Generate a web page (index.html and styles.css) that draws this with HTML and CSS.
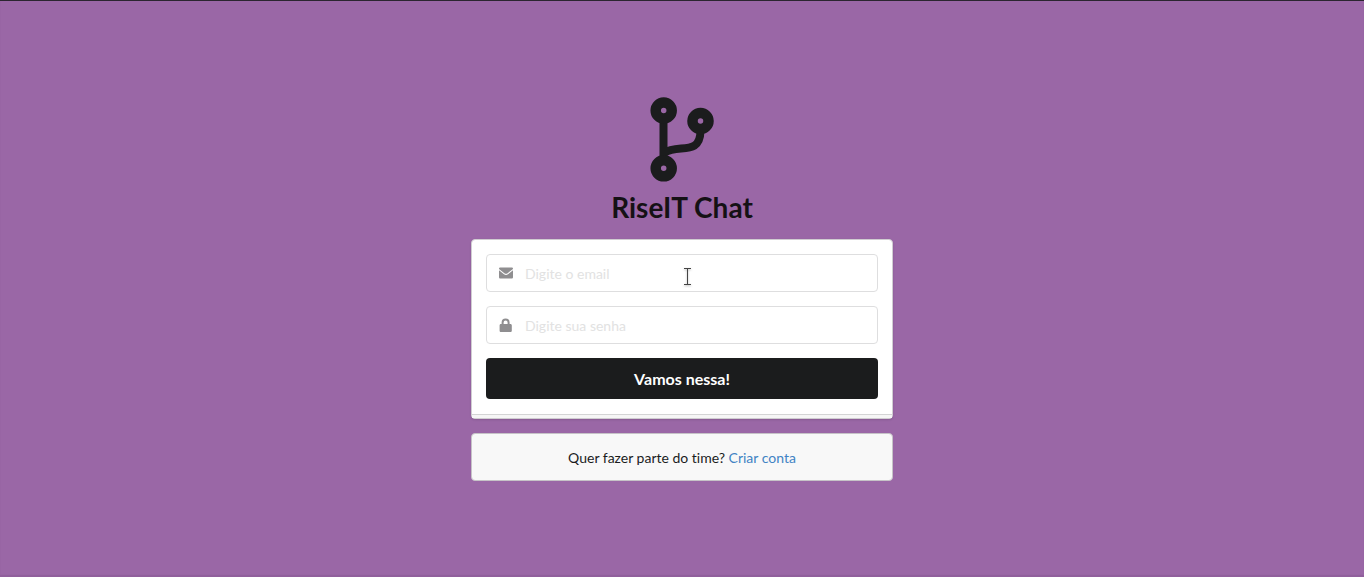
FILE: index.html
```html
<!DOCTYPE html>
<html lang="pt-BR">
<head>
<meta charset="utf-8">
<title>RiseIT Chat</title>
<link rel="stylesheet" href="styles.css">
</head>
<body>
<main class="login">
  <header class="brand">
    <svg class="brand-icon" viewBox="0 0 64 86" aria-hidden="true">
      <path d="M13.500 20V64M50.500 34C50 60 27 46 14.500 56" fill="none" stroke="currentColor" stroke-width="8"/>
      <g fill="none" stroke="currentColor" stroke-width="10.500">
        <circle cx="13.700" cy="13.500" r="8"/>
        <circle cx="50.500" cy="24" r="8"/>
        <circle cx="13.700" cy="71.300" r="8"/>
      </g>
    </svg>
    <h1 class="brand-title">RiseIT Chat</h1>
  </header>
  <form class="card">
    <label class="field">
      <svg class="field-icon" viewBox="0 0 14 14" aria-hidden="true">
        <path fill="currentColor" d="M1.300 1.500h11.400c.7 0 1.300.5 1.300 1.200v.4L8.300 7.400c-.8.600-1.800.6-2.600 0L0 3.100v-.4c0-.7.6-1.200 1.300-1.200zM0 4.300l5 3.900c1.200.9 2.800.9 4 0l5-3.900v6.900c0 .7-.6 1.300-1.300 1.300H1.300C.6 12.500 0 11.900 0 11.200z"/>
      </svg>
      <input class="field-input" type="email" placeholder="Digite o email" aria-label="Email">
    </label>
    <label class="field">
      <svg class="field-icon" viewBox="0 0 14 14" aria-hidden="true">
        <path fill="currentColor" fill-rule="evenodd" d="M1.900 6.100h.7V4.400a4 4 0 0 1 8 0v1.700h.9c.7 0 1.300.6 1.300 1.300v5.300c0 .7-.6 1.300-1.300 1.300H1.900C1.200 14 .6 13.400.6 12.700V7.400c0-.7.6-1.300 1.300-1.300zm2.700 0h4V4.400a2 2 0 0 0-4 0z"/>
      </svg>
      <input class="field-input" type="password" placeholder="Digite sua senha" aria-label="Senha">
    </label>
    <button class="submit" type="button">Vamos nessa!</button>
  </form>
  <p class="signup">Quer fazer parte do time? <a class="signup-link" href="#">Criar conta</a></p>
</main>
<svg class="cursor" viewBox="0 0 9 19" aria-hidden="true">
  <path d="M1 1.500h7M1 17.500h7M4.500 2v15" fill="none" stroke="#444" stroke-width="1"/>
</svg>
</body>
</html>
```
FILE: styles.css
```css
* {
  box-sizing: border-box;
}

body {
  margin: 0;
  min-height: 100vh;
  border-top: 1px solid #2b2530;
  box-shadow: inset 0 -2px 1px #905f9c;
  background: #9a67a6;
  color: #1b1c1d;
  font: 14px/20px Lato, "Open Sans", sans-serif;
  font-variant-ligatures: none;
  display: flex;
  justify-content: center;
  align-items: center;
}

.login {
  width: 100%;
  max-width: 422px;
}

.brand {
  display: flex;
  flex-direction: column;
  align-items: center;
  margin-bottom: 14px;
}

.brand-icon {
  width: 64px;
  height: 86px;
}

.brand-title {
  margin: 6px 0 0;
  font-size: 28px;
  line-height: 36px;
  font-weight: 700;
  color: #151115;
}

.card {
  position: relative;
  display: flex;
  flex-direction: column;
  gap: 14px;
  padding: 14px 14px 19px;
  background: #fff;
  border: 1px solid #d0cdd1;
  border-radius: 4px;
  box-shadow: 0 1px 2px rgba(34, 36, 38, 0.15);
}

.card::after {
  content: "";
  position: absolute;
  left: 0;
  right: 0;
  bottom: 0;
  height: 3px;
  border-top: 1px solid #d4d4d5;
  background: #f6f6f6;
}

.field {
  display: flex;
  align-items: center;
  height: 38px;
  border: 1px solid #dededf;
  border-radius: 4px;
  padding-left: 12px;
  gap: 12px;
}

.field-icon {
  flex: none;
  width: 14px;
  height: 14px;
  color: #8f8e90;
}

.field-input {
  flex: 1;
  min-width: 0;
  height: 36px;
  padding: 0 14px 0 0;
  border: 0;
  outline: 0;
  background: transparent;
  color: inherit;
  font: inherit;
}

.field-input::placeholder {
  color: #e2e2e2;
  opacity: 1;
}

.submit {
  height: 41px;
  border: 0;
  border-radius: 4px;
  background: #1b1c1d;
  color: #fff;
  font: 700 16px/16px Lato, "Open Sans", sans-serif;
}

.signup {
  margin: 14px 0 0;
  padding: 14px 14px 12px;
  background: #f8f8f8;
  border: 1px solid #c6c3c7;
  border-radius: 4px;
  text-align: center;
}

.signup-link {
  color: #4183c4;
  text-decoration: none;
}

.cursor {
  position: absolute;
  left: 683px;
  top: 267px;
  width: 9px;
  height: 19px;
  filter: drop-shadow(0 1px 1px rgba(0, 0, 0, 0.3));
  pointer-events: none;
}
```
